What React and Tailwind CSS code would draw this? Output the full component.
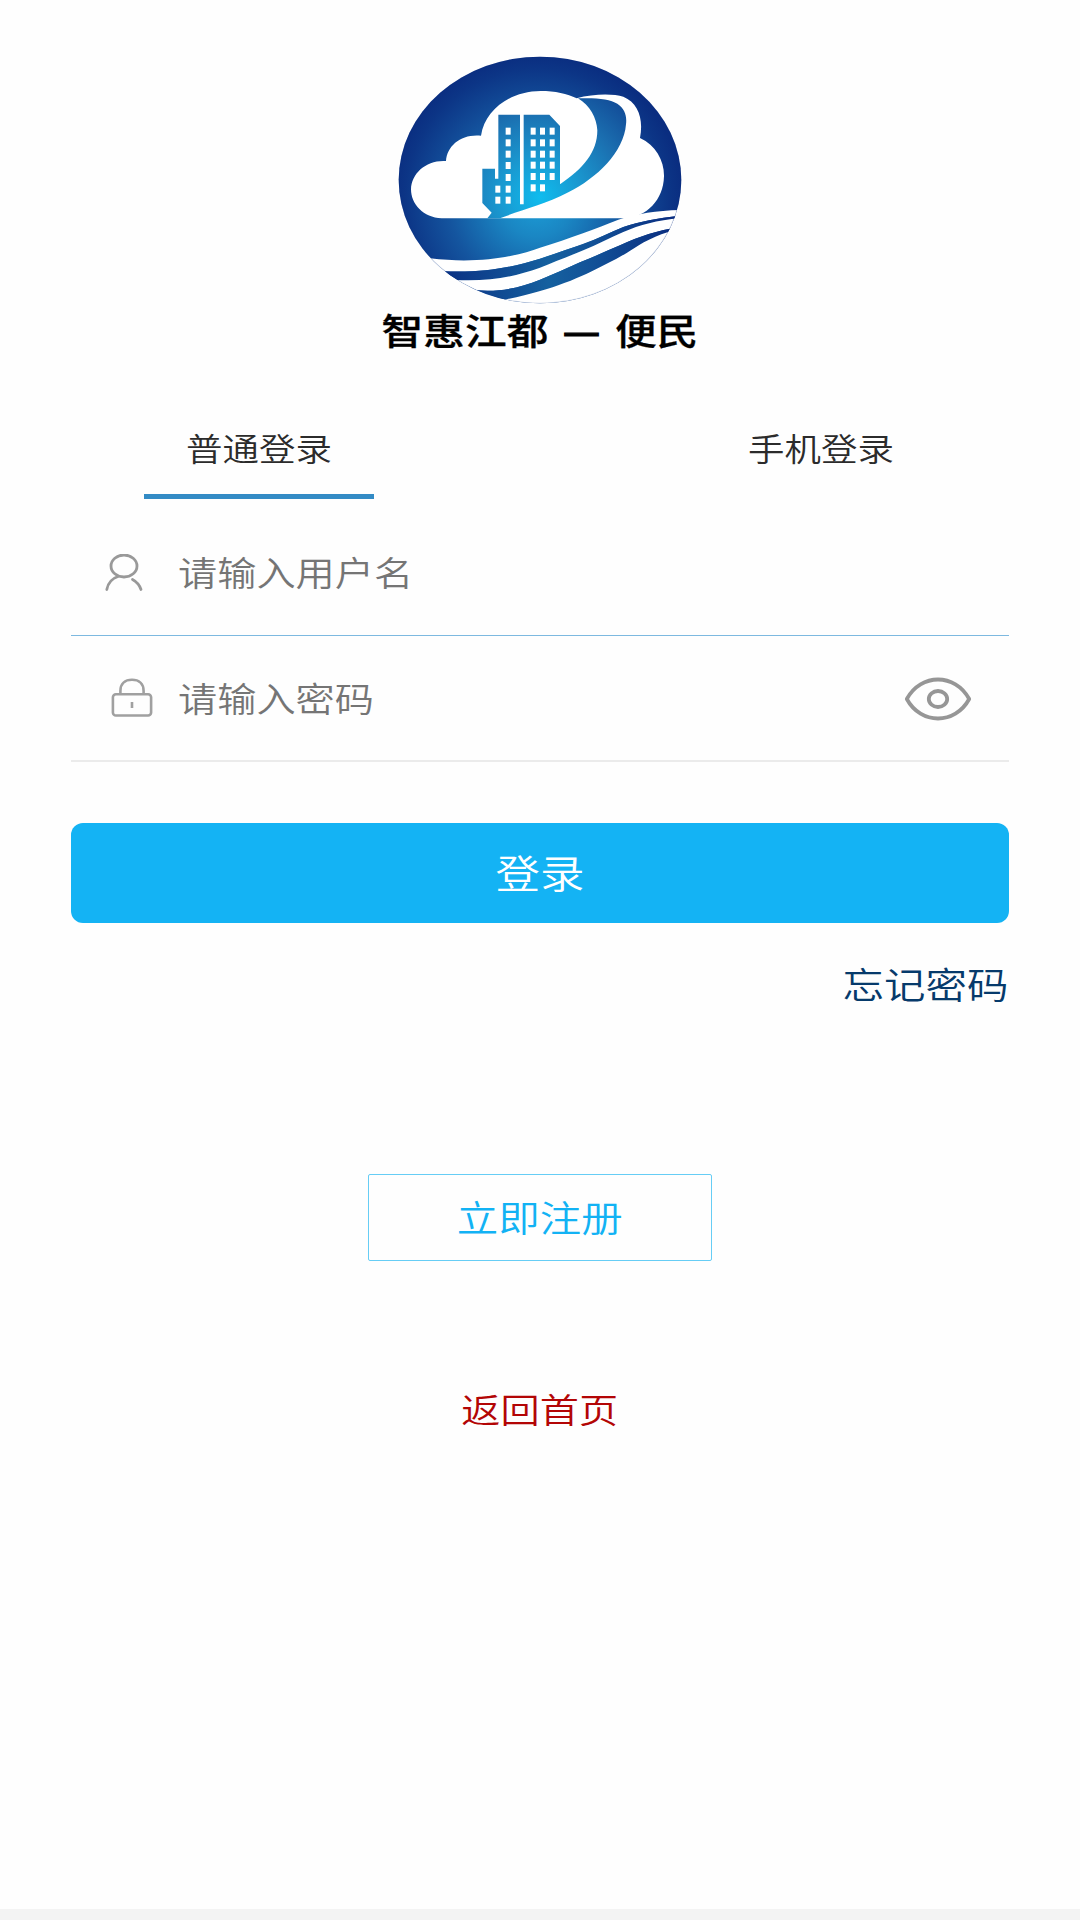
import React, { useState } from 'react';

const windows = [
  [377, 262], [377, 297], [377, 331], [377, 365], [377, 401], [377, 436], [377, 469],
  [346, 436], [346, 469],
  [452, 262], [480, 262], [509, 262],
  [452, 297], [480, 297], [509, 297],
  [452, 331], [480, 331], [509, 331],
  [452, 364], [480, 364], [509, 364],
  [452, 398], [480, 398], [509, 398],
  [452, 432], [480, 432],
];

const Logo = () => (
  <svg className="h-[248px] w-[284px]" viewBox="54 47 852 744" fill="none">
    <defs>
      <radialGradient id="sky" gradientUnits="userSpaceOnUse" cx="470" cy="480" r="440">
        <stop offset="0" stopColor="#1c9fd8" />
        <stop offset="0.25" stopColor="#1a86c3" />
        <stop offset="0.6" stopColor="#14559f" />
        <stop offset="0.9" stopColor="#0c3586" />
        <stop offset="1" stopColor="#0a2d80" />
      </radialGradient>
      <radialGradient id="tower" gradientUnits="userSpaceOnUse" cx="480" cy="470" r="360">
        <stop offset="0" stopColor="#0fbcee" />
        <stop offset="0.35" stopColor="#1a97cf" />
        <stop offset="0.7" stopColor="#1b70b1" />
        <stop offset="1" stopColor="#134f9a" />
      </radialGradient>
      <linearGradient id="stripe" gradientUnits="userSpaceOnUse" x1="200" y1="0" x2="880" y2="0">
        <stop offset="0" stopColor="#0b3284" />
        <stop offset="0.45" stopColor="#15609f" />
        <stop offset="0.65" stopColor="#125197" />
        <stop offset="1" stopColor="#0a2d80" />
      </linearGradient>
      <clipPath id="round">
        <ellipse cx="480" cy="419" rx="424" ry="370" />
      </clipPath>
    </defs>
    <g clipPath="url(#round)">
      <rect x="54" y="47" width="852" height="744" fill="url(#sky)" />
      {/* cloud */}
      <path
        fill="#fff"
        d="M185 534C130 532 93 492 93 447C94 398 140 358 198 362C201 315 245 280 303 286C315 208 392 152 482 152C525 152 562 160 590 174C640 160 700 160 730 169C775 188 791 235 780 293C828 315 853 362 852 408C850 480 800 530 735 534Z"
      />
      {/* towers and swoosh */}
      <path
        fill="url(#tower)"
        d="M355 223H508L540 257V432C610 385 652 335 652 270C650 232 630 196 594 174C650 172 690 176 712 190C735 206 741 226 738 252C732 335 650 414 565 456C490 495 420 510 360 534H322L335 517L307 488V385H345V415H355Z"
      />
      <path fill="#fff" d="M420 220H431V492H420Z" />
      {windows.map(([x, y]) => (
        <rect key={`${x}-${y}`} x={x} y={y} width="15" height="21" fill="#fff" />
      ))}
      {/* waves */}
      <path
        fill="#fff"
        d="M150 654C300 672 410 648 480 622C570 594 650 564 715 538C770 520 830 511 900 509V526C830 534 780 543 730 560C690 577 650 596 610 612C560 628 520 642 480 655C400 680 320 698 190 693Z"
      />
      <path fill="url(#stripe)" d="M190 693C320 698 400 680 480 655C520 642 560 628 610 610C650 596 690 577 730 560C780 543 830 534 900 526V534C830 540 780 554 730 575C690 592 650 614 610 630C560 650 520 666 480 682C400 710 330 724 225 719Z" />
      <path
        fill="#fff"
        d="M225 719C330 724 400 710 480 682C520 666 560 650 610 630C650 614 690 592 730 575C780 554 830 540 900 534V561C830 570 780 588 720 615C680 632 640 650 600 666C560 684 520 702 480 718C420 742 360 756 290 750Z"
      />
      <path fill="url(#stripe)" d="M290 750C360 756 420 742 480 718C520 702 560 684 600 666C640 650 680 632 720 615C780 588 830 570 900 561V565C850 576 800 598 760 625C730 644 710 656 680 670C600 712 520 748 375 778Z" />
      <path fill="#fff" d="M375 778C520 748 600 712 680 670C710 656 730 644 760 625C800 598 850 576 900 565V800H375Z" />
      <ellipse cx="480" cy="419" rx="424" ry="370" stroke="#0a2d80" strokeOpacity="0.15" strokeWidth="4" />
    </g>
  </svg>
);

const UserIcon = () => (
  <svg className="h-[38px] w-[38px]" viewBox="0 0 38 38" fill="none" stroke="#999999" strokeWidth="2.8" strokeLinecap="round">
    <ellipse cx="19" cy="12" rx="13" ry="11" />
    <path d="M13 22.500C7 24.500 3 29 1.800 35.500M27.500 25.500C32 28 34.500 31 36 35.500" />
  </svg>
);

const LockIcon = () => (
  <svg className="h-10 w-[42px]" viewBox="0 0 42 40" fill="none" stroke="#a0a0a0" strokeWidth="2.6">
    <rect x="1.900" y="16.200" width="38.200" height="21.300" rx="3" />
    <path d="M9.400 16V13C9.400 6 14 1.800 21 1.800S32.600 6 32.600 13V16M21 24V30" />
  </svg>
);

const EyeIcon = () => (
  <svg className="mt-0.5 h-11 w-[68px]" viewBox="0 0 68 44" fill="none" stroke="#969696" strokeWidth="3.8" strokeLinejoin="round">
    <path d="M2.800 22C17 -4 51 -4 65.200 22C51 48 17 48 2.800 22Z" />
    <ellipse cx="34" cy="22" rx="9.200" ry="8" />
  </svg>
);

const tabs = ['普通登录', '手机登录'];

const App = () => {
  const [active, setActive] = useState(0);

  return (
    <div className="flex h-[1920px] w-[1080px] flex-col bg-[#fefefe] font-['Noto_Sans_CJK_SC',sans-serif] font-[350]">
      <header className="flex flex-col items-center pt-14">
        <Logo />
        <h1 className="-mt-0.5 h-14 scale-x-[1.14] text-[36.600px] leading-14 font-medium [word-spacing:4.500px] whitespace-pre text-black [-webkit-text-stroke:0.300px_black]">
          智惠江都 <span className="[-webkit-text-stroke:1.200px_black]">—</span> 便民
        </h1>
      </header>

      <main className="flex flex-1 flex-col px-[71px]">
        <nav className="mt-14 flex justify-between">
          {tabs.map((tab, i) => (
            <button key={tab} onClick={() => setActive(i)} className="flex w-2/5 flex-col items-center">
              <span className="h-20 scale-x-[1.14] text-[32px] leading-[66px] text-[#2b2b2b]">{tab}</span>
              <span className={i === active ? 'h-[5px] w-[230px] bg-[#338bc5]' : 'h-[5px] w-[230px]'} />
            </button>
          ))}
        </nav>

        <div className="mt-3 flex h-[125px] items-center border-b border-[#7db9e0] pl-[34px] text-[#757575]">
          <UserIcon />
          <span className="mb-1 ml-[35px] origin-left scale-x-[1.14] text-[34.400px] leading-none">请输入用户名</span>
        </div>
        <div className="flex h-[126px] items-center border-b-2 border-[#ebebeb] pr-[37px] pl-10 text-[#757575]">
          <LockIcon />
          <span className="mb-0.5 ml-[25px] flex-1 origin-left scale-x-[1.14] text-[34.400px] leading-none">请输入密码</span>
          <EyeIcon />
        </div>

        <button className="mt-[61px] flex h-[100px] items-center justify-center rounded-xl bg-[#14b3f4]">
          <span className="mb-1 scale-x-[1.14] text-[39px] leading-none text-white">登录</span>
        </button>
        <a className="mt-8 h-14 origin-right scale-x-[1.14] self-end text-[36.400px] leading-14 text-[#063a6b]">忘记密码</a>

        <button className="mt-[163px] flex h-[87px] w-[344px] items-center justify-center self-center rounded-xs border border-[#66cdf5]">
          <span className="mb-0.5 scale-x-[1.14] text-[36.400px] leading-none text-[#12b2f4]">立即注册</span>
        </button>
        <a className="mt-[119px] h-14 scale-x-[1.14] self-center text-[34.400px] leading-14 text-[#b30505]">返回首页</a>
      </main>

      <footer className="h-[11px] bg-[#f3f3f3]" />
    </div>
  );
};

export default App;
